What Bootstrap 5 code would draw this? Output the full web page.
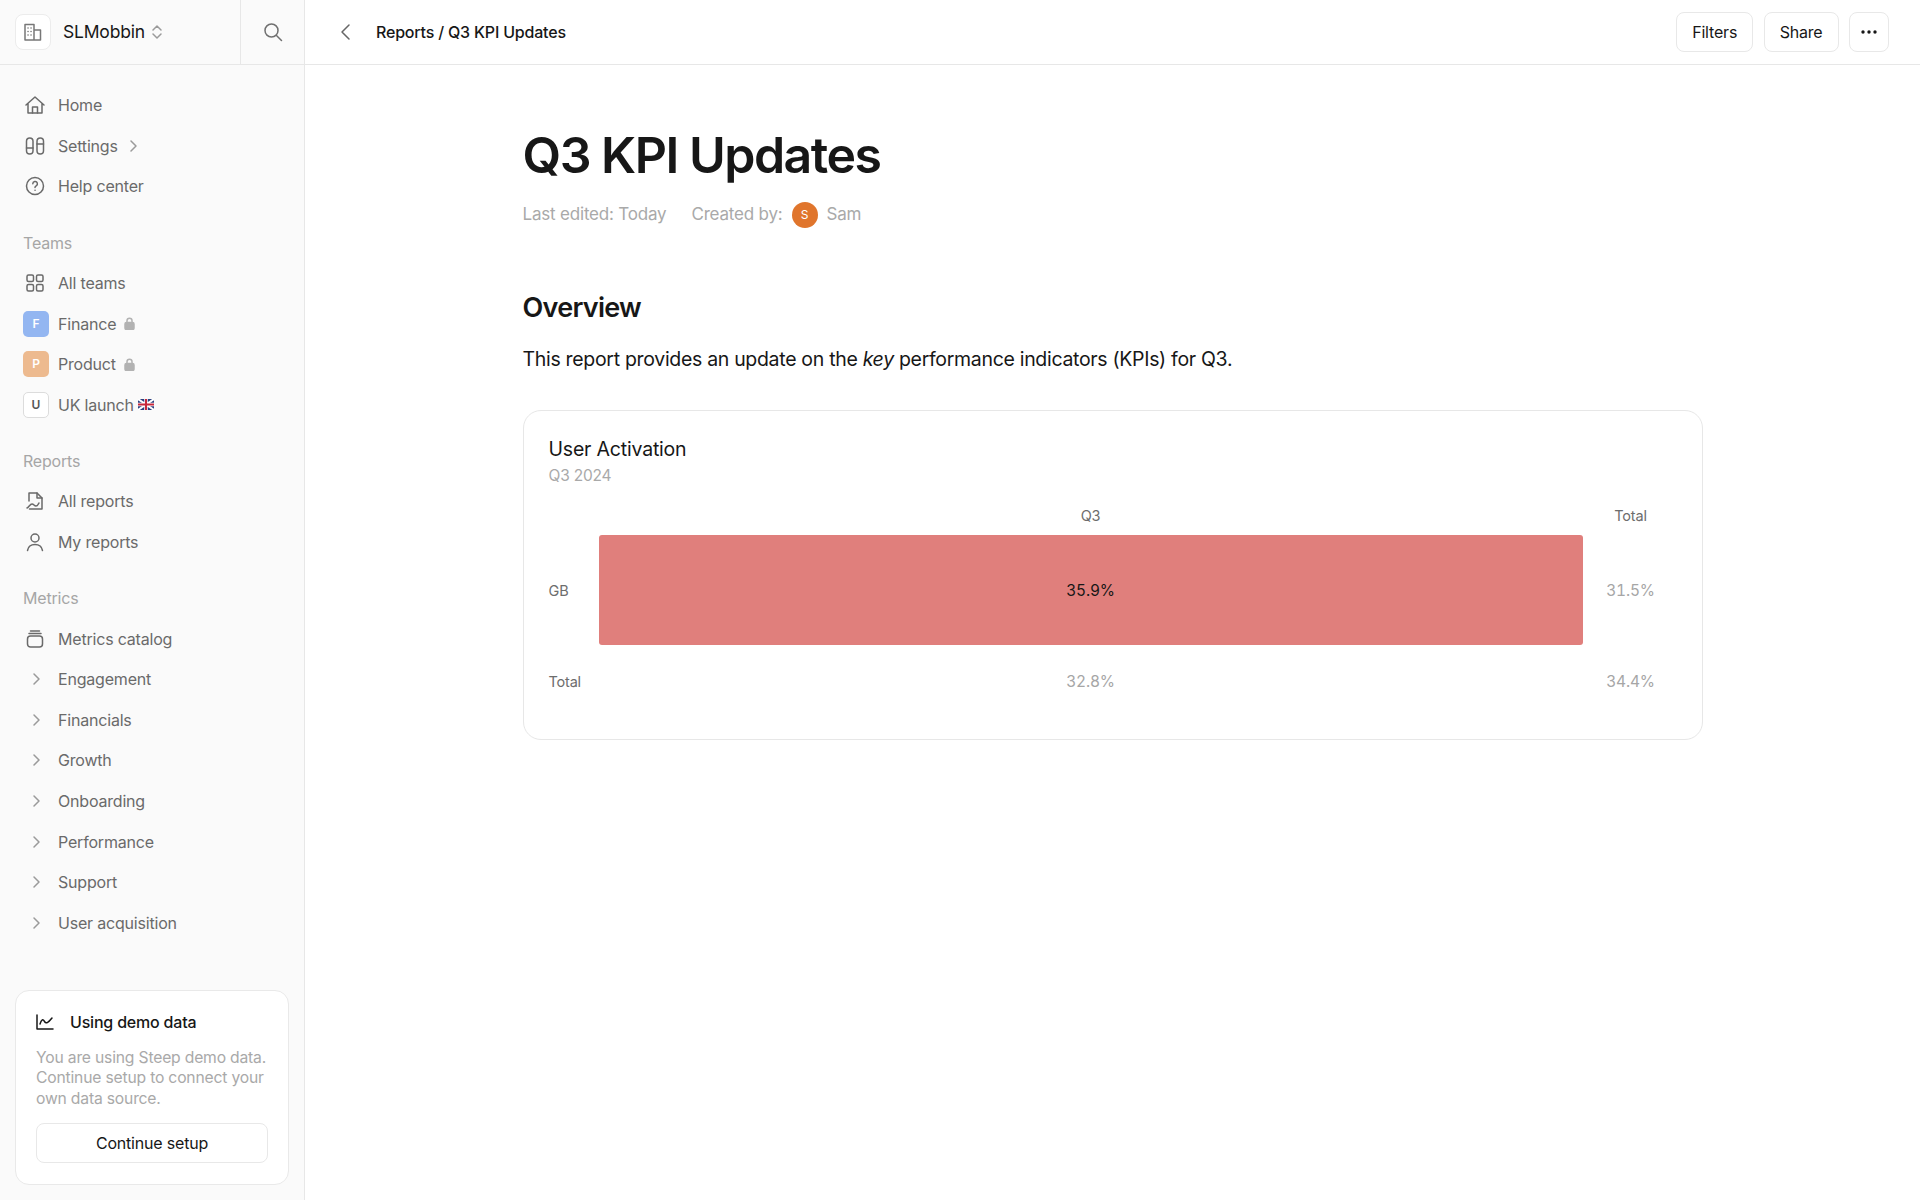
<!DOCTYPE html>
<html lang="en">
<head>
    <meta charset="UTF-8">
    <meta name="viewport" content="width=device-width, initial-scale=1.0">
    <title>Q3 KPI Updates</title>
    <link href="https://cdn.jsdelivr.net/npm/bootstrap@5.3.0/dist/css/bootstrap.min.css" rel="stylesheet">
    <style>
        body {
            font-family: Inter, "Liberation Sans", sans-serif;
            color: #171717;
            background: #fff;
            letter-spacing: -0.012em;
        }
        svg { display: block; flex: none; fill: none; stroke: currentColor; stroke-width: 1.5; stroke-linecap: round; stroke-linejoin: round; }
        .app-shell { height: 1200px; overflow: hidden; }
        .side-bar { width: 305px; flex: none; background: #fafafa; border-right: 1px solid #e7e7e7; }
        .side-top { height: 65px; border-bottom: 1px solid #e7e7e7; }
        .org-switch { width: 241px; padding-left: 15px; border-right: 1px solid #e7e7e7; }
        .org-logo { width: 36px; height: 36px; border: 1px solid #ececec; border-radius: 8px; background: #fff; color: #777; }
        .org-name { font-size: 17.5px; margin-left: 12px; margin-right: 6px; color: #171717; }
        .search-cell { width: 63px; color: #707070; }
        .side-nav { padding-top: 20px; }
        .side-link { height: 40.6px; padding-left: 22px; font-size: 16px; color: #6a6a6a; text-decoration: none; }
        .link-glyph { width: 27px; padding-left: 2px; margin-right: 9px; color: #6a6a6a; }
        .caret-glyph { color: #9a9a9a; }
        .side-caret { margin-left: 11px; }
        .side-head { height: 38px; margin-top: 17px; margin-bottom: 1px; padding-left: 23px; font-size: 16px; color: #a6a6a6; }
        .team-tile { width: 26px; height: 26px; border-radius: 5px; font-size: 12px; font-weight: 600; color: #fff; margin-right: 9px; margin-left: 1px; letter-spacing: 0; }
        .tile-blue { background: #93b6f1; }
        .tile-orange { background: #edba8f; }
        .tile-plain { background: #fff; color: #555; border: 1px solid #dcdcdc; }
        .lock-glyph { color: #b2b2b2; margin-left: 8px; }
        .demo-box { margin: auto 15px 15px; padding: 19px 20px 20px; height: 195px; background: #fff; border: 1px solid #e9e9e9; border-radius: 14px; }
        .demo-title { font-size: 16px; font-weight: 500; color: #171717; }
        .demo-text { font-size: 15.7px; line-height: 20.3px; color: #a9a9a9; margin: 14px 0 14px; }
        .plain-btn { background: #fff; border: 1px solid #e8e8e8; border-radius: 8px; color: #171717; font-size: 16px; height: 40px; padding: 0 15px; letter-spacing: -0.012em; display: flex; align-items: center; justify-content: center; }
        .more-btn { width: 40px; padding: 0; }
        .top-actions { gap: 10.5px; }
        .top-bar { height: 65px; border-bottom: 1px solid #e7e7e7; padding: 0 31px 0 34px; }
        .crumb { font-size: 16px; font-weight: 500; margin-left: 25px; }
        .back-glyph { color: #666; }
        .page-body { width: 1180px; margin: 0 auto; padding-top: 55px; }
        .page-title { font-size: 50px; line-height: 70px; font-weight: 600; letter-spacing: -0.03em; margin: 0; }
        .page-meta { font-size: 17px; color: #a9a9a9; margin-top: 10px; height: 30px; }
        .meta-edit { margin-right: 25px; }
        .author-dot { width: 26px; height: 26px; border-radius: 50%; background: #e0752c; color: #fff; font-size: 12px; margin: 0 9px; letter-spacing: 0; }
        .section-title { font-size: 27px; line-height: 36px; font-weight: 600; letter-spacing: -0.027em; margin: 60px 0 0; }
        .section-copy { font-size: 19.5px; line-height: 28px; margin: 19px 0 0; letter-spacing: -0.016em; }
        .chart-box { margin-top: 37px; height: 330px; border: 1px solid #e7e7e7; border-radius: 18px; padding: 24px 24px 0 25px; }
        .chart-title { font-size: 19.5px; line-height: 28px; color: #171717; }
        .chart-sub { font-size: 15.5px; line-height: 26px; color: #a9a9a9; }
        .chart-grid { display: grid; grid-template-columns: 50px 984px 96px; grid-template-rows: 44px 110px 72px; font-size: 14.5px; margin-top: 2px; }
        .chart-grid > div { display: flex; align-items: center; justify-content: center; }
        .chart-grid .row-name { justify-content: flex-start; color: #6d6d6d; padding-top: 1px; }
        .col-name { color: #6d6d6d; padding-top: 6px; }
        .muted-val { color: #a6a6a6; font-size: 15.5px; font-variant-numeric: tabular-nums; padding-top: 1px; }
        .bar-cell { background: #e07f7c; border-radius: 3px; color: #171717; font-size: 15.5px; font-variant-numeric: tabular-nums; padding-top: 1px; }
    </style>
</head>
<body>
    <div class="app-shell d-flex">
        <aside class="side-bar d-flex flex-column">
            <div class="side-top d-flex">
                <div class="org-switch d-flex align-items-center">
                    <div class="org-logo d-flex align-items-center justify-content-center">
                        <svg width="20" height="20" viewBox="0 0 20 20"><path d="M2 18V2.500h9V18zM11 8h6.500v10H11z"/><path d="M5 6h.1M8 6h.1M5 9.500h.1M8 9.500h.1M5 13h.1M8 13h.1"/></svg>
                    </div>
                    <span class="org-name">SLMobbin</span>
                    <svg class="caret-glyph" width="12" height="16" viewBox="0 0 12 16"><path d="M2 6l4-4 4 4M2 10l4 4 4-4"/></svg>
                </div>
                <div class="search-cell d-flex align-items-center justify-content-center">
                    <svg width="20" height="20" viewBox="0 0 20 20"><circle cx="8.500" cy="8.500" r="6.500"/><path d="M13.500 13.500L18.500 18.500"/></svg>
                </div>
            </div>

            <nav class="side-nav">
                <a class="side-link d-flex align-items-center" href="#"><span class="link-glyph"><svg width="22" height="22" viewBox="0 0 22 22"><path d="M2 11l9-8 9 8M4 9.500V19h14V9.500"/><path d="M8.500 19v-6h5v6"/></svg></span>Home</a>
                <a class="side-link d-flex align-items-center" href="#"><span class="link-glyph"><svg width="22" height="22" viewBox="0 0 22 22"><rect x="2.500" y="3" width="6.500" height="16" rx="3.250"/><rect x="13" y="3" width="6.500" height="16" rx="3.250"/><path d="M2.500 13H9M13 9h6.500"/></svg></span>Settings<svg class="caret-glyph side-caret" width="10" height="14" viewBox="0 0 10 14"><path d="M2 2l5 5-5 5"/></svg></a>
                <a class="side-link d-flex align-items-center" href="#"><span class="link-glyph"><svg width="22" height="22" viewBox="0 0 22 22"><circle cx="11" cy="11" r="8.500"/><path d="M8.800 8.800a2.300 2.300 0 1 1 3.400 2c-.8.500-1.200 1-1.200 1.700M11 15.300h.1"/></svg></span>Help center</a>

                <div class="side-head d-flex align-items-center">Teams</div>
                <a class="side-link d-flex align-items-center" href="#"><span class="link-glyph"><svg width="22" height="22" viewBox="0 0 22 22"><rect x="3" y="3" width="6.500" height="6.500" rx="1.500"/><rect x="12.500" y="3" width="6.500" height="6.500" rx="1.500"/><rect x="3" y="12.500" width="6.500" height="6.500" rx="1.500"/><rect x="12.500" y="12.500" width="6.500" height="6.500" rx="1.500"/></svg></span>All teams</a>
                <a class="side-link d-flex align-items-center" href="#"><span class="team-tile tile-blue d-flex align-items-center justify-content-center">F</span>Finance<svg class="lock-glyph" width="11" height="13" viewBox="0 0 11 13"><path d="M3 6V3.800a2.500 2.500 0 0 1 5 0V6"/><rect x="1" y="5.500" width="9" height="7" rx="1.500" fill="currentColor"/></svg></a>
                <a class="side-link d-flex align-items-center" href="#"><span class="team-tile tile-orange d-flex align-items-center justify-content-center">P</span>Product<svg class="lock-glyph" width="11" height="13" viewBox="0 0 11 13"><path d="M3 6V3.800a2.500 2.500 0 0 1 5 0V6"/><rect x="1" y="5.500" width="9" height="7" rx="1.500" fill="currentColor"/></svg></a>
                <a class="side-link d-flex align-items-center" href="#"><span class="team-tile tile-plain d-flex align-items-center justify-content-center">U</span>UK launch
                    <svg class="ms-1" width="16" height="11" viewBox="0 0 16 11" style="stroke-linecap:butt"><rect width="16" height="11" rx="1.500" fill="#2b3f7e" stroke="none"/><path d="M0 0l16 11M16 0L0 11" stroke="#fff" stroke-width="2"/><path d="M8 0v11M0 5.500h16" stroke="#fff" stroke-width="3.500"/><path d="M8 0v11M0 5.500h16" stroke="#c8283c" stroke-width="2"/></svg>
                </a>

                <div class="side-head d-flex align-items-center">Reports</div>
                <a class="side-link d-flex align-items-center" href="#"><span class="link-glyph"><svg width="22" height="22" viewBox="0 0 22 22"><path d="M5 11V3h8l5 5v11H5.500"/><path d="M13 3v5h5"/><path d="M3 18c2-1 3-4 5-4s2 2 4 2 2-2 3-3"/></svg></span>All reports</a>
                <a class="side-link d-flex align-items-center" href="#"><span class="link-glyph"><svg width="22" height="22" viewBox="0 0 22 22"><circle cx="11" cy="7" r="4"/><path d="M3.500 19.500c.7-4 3.700-6 7.500-6s6.800 2 7.500 6"/></svg></span>My reports</a>

                <div class="side-head d-flex align-items-center">Metrics</div>
                <a class="side-link d-flex align-items-center" href="#"><span class="link-glyph"><svg width="22" height="22" viewBox="0 0 22 22"><rect x="3.500" y="8" width="15" height="11" rx="3"/><path d="M5 5.500h12M6.500 3h9"/></svg></span>Metrics catalog</a>
                <a class="side-link d-flex align-items-center" href="#"><span class="link-glyph caret-glyph"><svg class="ms-2" width="10" height="14" viewBox="0 0 10 14"><path d="M2 2l5 5-5 5"/></svg></span>Engagement</a>
                <a class="side-link d-flex align-items-center" href="#"><span class="link-glyph caret-glyph"><svg class="ms-2" width="10" height="14" viewBox="0 0 10 14"><path d="M2 2l5 5-5 5"/></svg></span>Financials</a>
                <a class="side-link d-flex align-items-center" href="#"><span class="link-glyph caret-glyph"><svg class="ms-2" width="10" height="14" viewBox="0 0 10 14"><path d="M2 2l5 5-5 5"/></svg></span>Growth</a>
                <a class="side-link d-flex align-items-center" href="#"><span class="link-glyph caret-glyph"><svg class="ms-2" width="10" height="14" viewBox="0 0 10 14"><path d="M2 2l5 5-5 5"/></svg></span>Onboarding</a>
                <a class="side-link d-flex align-items-center" href="#"><span class="link-glyph caret-glyph"><svg class="ms-2" width="10" height="14" viewBox="0 0 10 14"><path d="M2 2l5 5-5 5"/></svg></span>Performance</a>
                <a class="side-link d-flex align-items-center" href="#"><span class="link-glyph caret-glyph"><svg class="ms-2" width="10" height="14" viewBox="0 0 10 14"><path d="M2 2l5 5-5 5"/></svg></span>Support</a>
                <a class="side-link d-flex align-items-center" href="#"><span class="link-glyph caret-glyph"><svg class="ms-2" width="10" height="14" viewBox="0 0 10 14"><path d="M2 2l5 5-5 5"/></svg></span>User acquisition</a>
            </nav>

            <div class="demo-box">
                <div class="d-flex align-items-center gap-3 demo-title">
                    <svg width="18" height="16" viewBox="0 0 18 16"><path d="M1 1v14h16"/><path d="M4 10c1.500-5 3-5 4.500-2.500S12 9 16 4"/></svg>
                    Using demo data
                </div>
                <p class="demo-text text-nowrap">You are using Steep demo data.<br>Continue setup to connect your<br>own data source.</p>
                <button class="plain-btn w-100" type="button">Continue setup</button>
            </div>
        </aside>

        <main class="flex-grow-1">
            <div class="top-bar d-flex align-items-center">
                <svg class="back-glyph" width="12" height="18" viewBox="0 0 12 18"><path d="M10 2L3 9l7 7"/></svg>
                <span class="crumb">Reports / Q3 KPI Updates</span>
                <div class="ms-auto d-flex top-actions">
                    <button class="plain-btn" type="button">Filters</button>
                    <button class="plain-btn" type="button">Share</button>
                    <button class="plain-btn more-btn" type="button" aria-label="More">
                        <svg width="16" height="4" viewBox="0 0 16 4"><g fill="#171717" stroke="none"><circle cx="2" cy="2" r="1.700"/><circle cx="8" cy="2" r="1.700"/><circle cx="14" cy="2" r="1.700"/></g></svg>
                    </button>
                </div>
            </div>

            <div class="page-body">
                <h1 class="page-title">Q3 KPI Updates</h1>
                <div class="page-meta d-flex align-items-center">
                    <span class="meta-edit">Last edited: Today</span>
                    <span>Created by:</span>
                    <span class="author-dot d-flex align-items-center justify-content-center">S</span>
                    <span>Sam</span>
                </div>

                <h2 class="section-title">Overview</h2>
                <p class="section-copy">This report provides an update on the <em>key</em> performance indicators (KPIs) for Q3.</p>

                <div class="chart-box">
                    <div class="chart-title">User Activation</div>
                    <div class="chart-sub">Q3 2024</div>
                    <div class="chart-grid">
                        <div></div>
                        <div class="col-name">Q3</div>
                        <div class="col-name">Total</div>
                        <div class="row-name">GB</div>
                        <div class="bar-cell">35.9%</div>
                        <div class="muted-val">31.5%</div>
                        <div class="row-name">Total</div>
                        <div class="muted-val">32.8%</div>
                        <div class="muted-val">34.4%</div>
                    </div>
                </div>
            </div>
        </main>
    </div>

    <script src="https://cdn.jsdelivr.net/npm/bootstrap@5.3.0/dist/js/bootstrap.bundle.min.js"></script>
</body>
</html>
